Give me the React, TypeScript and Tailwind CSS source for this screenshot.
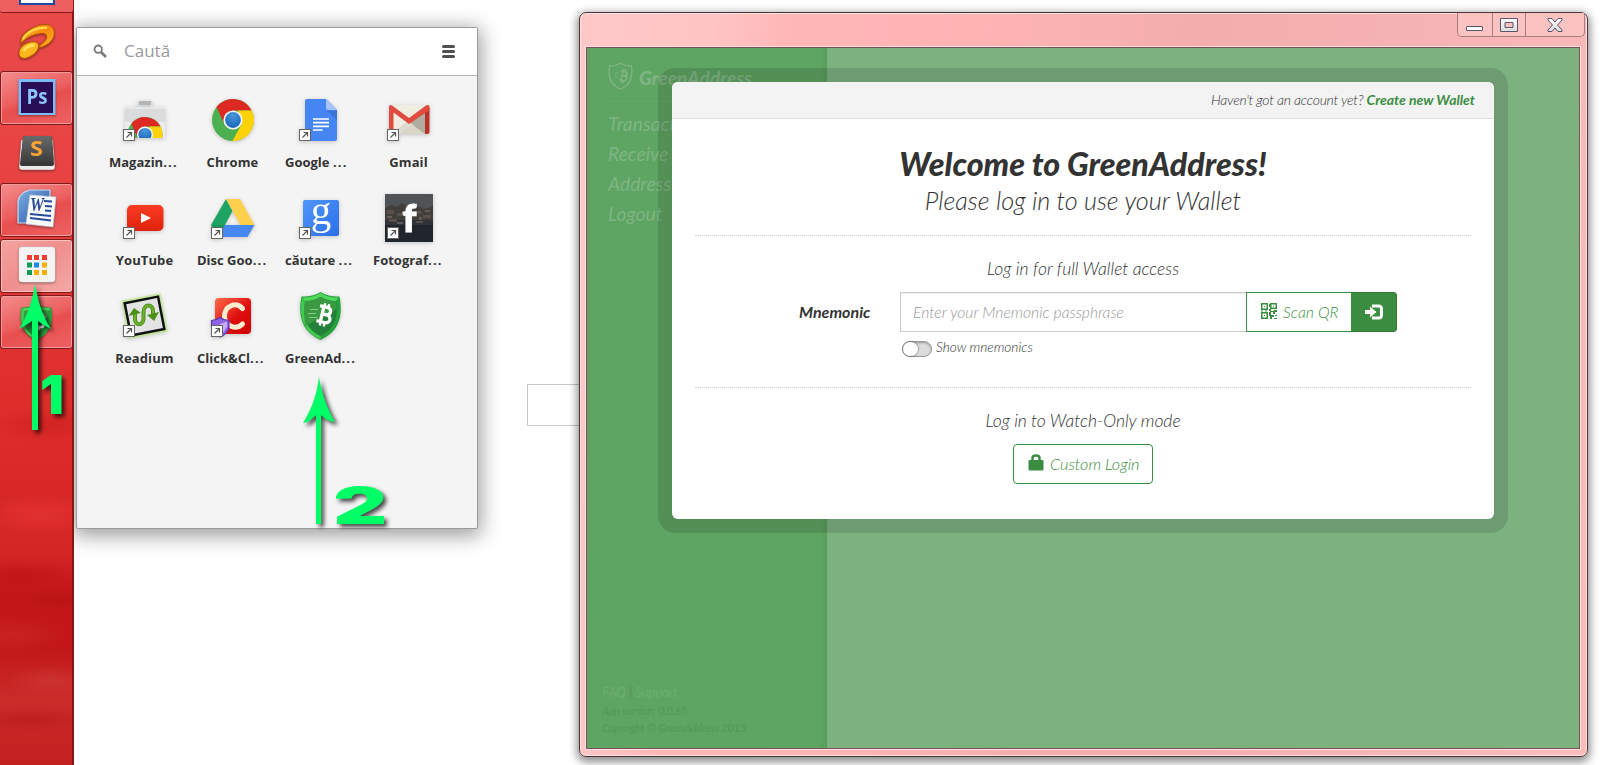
import React from "react";

function Badge() {
  return (
    <g>
      <rect x="2.5" y="33.5" width="11" height="11" fill="#fff" stroke="#666" />
      <path d="M5.5 41.5 L10.5 36.5 M6.5 36.5 H10.5 V40.5" fill="none" stroke="#555" strokeWidth="1.2" />
    </g>
  );
}

function ChromeBall({ cx, cy, r }: { cx: number; cy: number; r: number }) {
  return (
    <g transform={`translate(${cx} ${cy}) scale(${r / 21})`}>
      <circle r="21" fill="#4bb04f" />
      <path d="M-16.500 -13 A21 21 0 0 1 18.6 -9.5 L0 -9.5 L-8.2 4.8 Z" fill="#dc2a22" />
      <path d="M18.8 -9.5 A21 21 0 0 1 -0.6 21 L8.5 4.6 L5 -9.5 Z" fill="#fdd208" />
      <circle r="9.6" fill="#f4f6f8" />
      <circle r="7.9" fill="url(#blueBall)" />
    </g>
  );
}

function Shield() {
  return (
    <g>
      <path d="M23.5 0 C30 4 37 5 42.500 4.500 C45 18 46 38 23.500 48 C1 38 2 18 4.500 4.500 C10 5 17 4 23.500 0Z" fill="#25a03a" />
      <path d="M23.5 1 C30 5 37 6 41.500 5.500 L39 9 C33 9 28 7.500 23.500 5 C19 7.500 14 9 8 9 L5.500 5.500 C10 6 17 5 23.500 1Z" fill="#4fd65c" />
      <path d="M5 6 L8.500 9.500 C6 28 10 38 23.500 44 V47 C4 39 2.500 21 5 6Z" fill="#43cd50" />
      <path d="M23.5 5 C29 8 34 9.500 39 9.300 C41.500 28 36 38 23.500 44 C11 38 6 28 8 9.300 C13 9.500 18 8 23.500 5Z" fill="#23803a" />
      <path d="M8 9.300 C13 9.500 18 8 23.500 5 C29 8 34 9.500 39 9.300 L39.500 17 L8.500 34 C7 26 6.500 18 8 9.300Z" fill="#3a9a42" />
      <path d="M13 17.500H21 M11 21.500H19 M12 25.500H20" stroke="#8cc78e" strokeWidth="1" />
      <g transform="rotate(14 28 23)" fill="none" stroke="#fff" strokeWidth="3.300">
        <path d="M21 15H28.500C34 15 34 22.500 28.500 22.500H25H29C35.500 22.500 35.500 30.500 29 30.500H21 M25 15V30.500" />
        <path d="M25.500 11.500V15 M29.500 11.500V15 M25.500 31V34.500 M29.500 31V34.500" strokeWidth="2.300" />
      </g>
    </g>
  );
}

const icons: Record<string, React.ReactNode> = {
  store: (
    <g>
      <path d="M18 14V7H30V14" fill="none" stroke="#dcdddf" strokeWidth="3" />
      <rect x="18" y="5" width="12" height="4" fill="#b4b4b4" />
      <rect x="4" y="11" width="40" height="31" rx="1" fill="#d9dbdd" />
      <rect x="4" y="26" width="40" height="16" fill="#ebecee" />
      <path d="M4 12H44" stroke="#f2f2f2" strokeWidth="1" />
      <g clipPath="url(#storeClip)"><ChromeBall cx={24} cy={38.5} r={17.5} /></g>
      <Badge />
    </g>
  ),
  chrome: <ChromeBall cx={24} cy={24} r={21} />,
  docs: (
    <g>
      <path d="M10 3H29L40 14V43Q40 45 38 45H10Q8 45 8 43V5Q8 3 10 3Z" fill="#4686f4" />
      <path d="M29 3L40 14H31Q29 14 29 12Z" fill="#a6c4fa" />
      <path d="M29.500 14.500L40 24V14.500Z" fill="#3a72d8" />
      <path d="M16 23H32 M16 26.700H32 M16 30.300H32 M16 34H25.500" stroke="#fff" strokeWidth="1.700" />
      <Badge />
    </g>
  ),
  gmail: (
    <g>
      <rect x="4" y="9" width="40.500" height="29" rx="2" fill="#efece0" />
      <path d="M6 38L24 25L42 38Z" fill="#d9d6c9" />
      <path d="M24 26L40 15V38Z" fill="#b0ad9f" />
      <path d="M8 38L24 26L28 29L14 38Z" fill="#dedbcf" />
      <path d="M40 12H44.500V36Q44.500 38 42.500 38H40Z" fill="#b9302a" />
      <path d="M4 38V11Q4 8 7 9.500L24 22L41 9.500Q44.500 8 44.500 11V14L24 28L8.500 16.500V38Z" fill="#e04a3f" />
      <Badge />
    </g>
  ),
  youtube: (
    <g>
      <rect x="6" y="11" width="36.500" height="26" rx="5" fill="url(#ytRed)" />
      <path d="M20 19L30 24L20 29Z" fill="#fff" />
      <Badge />
    </g>
  ),
  drive: (
    <g>
      <path d="M17 5L23.500 17L9.500 43L2 31Z" fill="#1da362" />
      <path d="M17 5H31L45.500 31H31.500Z" fill="#ffd04b" />
      <path d="M2 31H45.500L38.500 43H9.500L16 31Z" fill="#4688f1" />
      <path d="M2 31L9.500 43L16 31Z" fill="#1b9558" />
      <Badge />
    </g>
  ),
  search: (
    <g>
      <rect x="6" y="6" width="36" height="36" rx="2" fill="url(#gBlue)" />
      <text x="24" y="29.500" textAnchor="middle" fontSize="41" fill="#fff" className="font-['Liberation_Serif',serif]">g</text>
      <Badge />
    </g>
  ),
  photos: (
    <g>
      <rect width="48" height="48" fill="#30343a" />
      <rect width="48" height="15" fill="#505355" />
      <path d="M0 14L6 11L12 13L17 9L24 14L32 12L40 15L48 12V26H0Z" fill="#413e3c" />
      <path d="M2 16H9V20H2Z M12 19H18V22H12Z M30 17H36V20H30Z M38 21H46V24H38Z M4 25H12V28H4Z M31 27H38V29H31Z" fill="#5a5049" />
      <path d="M18 18H24V20H18Z M34 23H37V26H34Z M2 22H7V24H2Z M40 16H45V18H40Z M12 28H18V30H12Z" fill="#625d58" />
      <rect y="31" width="48" height="17" fill="#20262c" />
      <text x="24.500" y="38" textAnchor="middle" fontSize="38" fontWeight="900" fill="#fff" stroke="#fff" strokeWidth="1.200" className="font-['Lato',sans-serif]">f</text>
      <Badge />
    </g>
  ),
  readium: (
    <g>
      <g transform="rotate(-11 24 24)">
        <rect x="5" y="6" width="37" height="36" fill="#b9e884" opacity="0.7" stroke="#b9e884" strokeWidth="3" />
        <rect x="6.500" y="7.500" width="34" height="33" fill="#e4e4e4" stroke="#111" strokeWidth="2.500" />
      </g>
      <path d="M14 20V27C14 34 22 34 22.500 27V20C23 11 32 12 32 19V26" fill="none" stroke="#4d8f1c" strokeWidth="4" />
      <path d="M14 20V27C14 34 22 34 22.500 27V20C23 11 32 12 32 19V26" fill="none" stroke="#6db12b" strokeWidth="2" />
      <path d="M7.500 24L13 16L20 21Z M26 23L38 20L33 29Z" fill="#4d8f1c" />
      <Badge />
    </g>
  ),
  click: (
    <g>
      <rect x="6" y="6" width="36" height="36" rx="4" fill="url(#ccRed)" />
      <path d="M33.500 16.500C27 9 15.500 14 15.500 24C15.500 34 27 38.500 33.500 32" fill="none" stroke="#fbecd0" strokeWidth="5" strokeLinecap="round" />
      <path d="M11 25.500Q15 28.500 20 28.500V35Q19 42 11 45Q3 42 2.500 35V28.500Q7 28.500 11 25.500Z" fill="#8d63ea" stroke="#5b35a8" strokeWidth="1.200" />
      <path d="M11 32L18 29.500V35Q16 39 11 43Z" fill="#c9a9fb" />
      <Badge />
    </g>
  ),
  green: <Shield />,
};

const apps = [
  { id: "store", label: "Magazin", cut: true },
  { id: "chrome", label: "Chrome" },
  { id: "docs", label: "Google ", cut: true },
  { id: "gmail", label: "Gmail" },
  { id: "youtube", label: "YouTube" },
  { id: "drive", label: "Disc Goo", cut: true },
  { id: "search", label: "căutare ", cut: true },
  { id: "photos", label: "Fotograf", cut: true },
  { id: "readium", label: "Readium" },
  { id: "click", label: "Click&Cl", cut: true },
  { id: "green", label: "GreenAd", cut: true },
];

function Defs() {
  return (
    <svg className="absolute h-0 w-0">
      <defs>
        <radialGradient id="blueBall" cx="0.5" cy="0.2" r="0.9"><stop offset="0" stopColor="#4a98dc" /><stop offset="1" stopColor="#1360b4" /></radialGradient>
        <clipPath id="storeClip"><rect x="6" y="15" width="36" height="27" /></clipPath>
        <linearGradient id="ytRed" x2="0" y2="1"><stop offset="0" stopColor="#fb3c23" /><stop offset="1" stopColor="#df220c" /></linearGradient>
        <linearGradient id="gBlue" x2="1" y2="1"><stop offset="0" stopColor="#4f97fb" /><stop offset="1" stopColor="#2a6fea" /></linearGradient>
        <linearGradient id="ccRed" x2="1" y2="1"><stop offset="0" stopColor="#ff6a4a" /><stop offset="0.55" stopColor="#e01010" /><stop offset="1" stopColor="#cc0000" /></linearGradient>
        <linearGradient id="jOrange" x2="1" y2="1"><stop offset="0" stopColor="#ffc31f" /><stop offset="0.5" stopColor="#f98a10" /><stop offset="1" stopColor="#ffb726" /></linearGradient>
        <linearGradient id="sGray" x2="0" y2="1"><stop offset="0" stopColor="#6a6a6a" /><stop offset="1" stopColor="#3d3d3d" /></linearGradient>
        <linearGradient id="wBlue" x2="1" y2="1"><stop offset="0" stopColor="#7fb0e4" /><stop offset="1" stopColor="#2450a0" /></linearGradient>
        <linearGradient id="winBtn" x2="0" y2="1"><stop offset="0" stopColor="#fff" /><stop offset="1" stopColor="#dcdcdc" /></linearGradient>
      </defs>
    </svg>
  );
}

const taskIcons: { id: string; node: React.ReactNode; frame?: "on" | "hot" }[] = [
  {
    id: "jet",
    node: (
      <g transform="translate(0 0.5) scale(0.97 1.06)">
        <path d="M3 18C1 8 18 0 29 0C41 1 40 15 28 20C25 21.500 22 22 20 22C22 20 25 18 28 15C31 12 30 8 24 8.500C16 9 8 13 3 18Z" fill="url(#jOrange)" stroke="#b3500c" strokeWidth="1" />
        <path d="M5 14C10 6 21 2.500 30 3" fill="none" stroke="#ffd94c" strokeWidth="2" />
        <path d="M1 27C1 20 10 16 17 16C24 17 22 25 15 29C8 33.500 1 33 1 27Z" fill="#ffb61c" stroke="#b3500c" strokeWidth="1" />
        <path d="M6 25C8 21 13 19 17 20" fill="none" stroke="#ffdf59" strokeWidth="3" />
      </g>
    ),
  },
  {
    id: "ps",
    frame: "on",
    node: (
      <g>
        <rect x="0.500" y="-1" width="37" height="36" fill="#7dbcf4" />
        <rect x="3" y="2" width="32" height="31" fill="#2a0d57" />
        <text x="19" y="23.500" textAnchor="middle" fontSize="21" fontWeight="700" fill="#8cc5ff" textLength="21" lengthAdjust="spacingAndGlyphs" className="font-['Open_Sans',sans-serif]">Ps</text>
      </g>
    ),
  },
  {
    id: "sublime",
    node: (
      <g>
        <path d="M3 4H35L37 31Q37 34 34 34H4Q1 34 1 31Z" fill="#eceae8" stroke="#a55" strokeWidth="0.500" />
        <path d="M5 2Q5 0 7 0H32Q34 0 34 2L36 28Q36 30 34 30H4Q2 30 2 28Z" fill="#383838" />
        <path d="M5 2Q5 0 7 0H32Q34 0 34 2L35.500 24Q35 26 33 26H5Q3 26 3 24Z" fill="url(#sGray)" />
        <text x="18.500" y="20" textAnchor="middle" fontSize="21" fontWeight="700" fill="#f9a137" textLength="13" lengthAdjust="spacingAndGlyphs" className="font-['Open_Sans',sans-serif]">S</text>
      </g>
    ),
  },
  {
    id: "word",
    frame: "on",
    node: (
      <g>
        <path d="M0 31V9Q2 0 12 -2H32V31Z" fill="url(#wBlue)" stroke="#c9dcf5" strokeWidth="1.200" />
        <path d="M12 3L38 5L35 35L8 32Z" fill="#f7f9fc" stroke="#c5cbd8" strokeWidth="0.700" />
        <text x="12" y="19" fontSize="18" fontWeight="700" fontStyle="italic" fill="#254a94" textLength="14" lengthAdjust="spacingAndGlyphs" className="font-['Liberation_Serif',serif]">W</text>
        <path d="M26 9L34 9.600 M27 14L34 14.500 M27 18.500L33 19 M12 22L33 24 M12 26L33 28.500" stroke="#274c9b" strokeWidth="2" />
      </g>
    ),
  },
  {
    id: "launcher",
    frame: "hot",
    node: (
      <g>
        <rect x="1" y="-1" width="36" height="35" rx="3" fill="#f4f4f4" stroke="#ddd" strokeWidth="0.600" />
        <path d="M9 7H14V12H9Z M16 7H21V12H16Z M24 7H29V12H24Z" fill="#f23d34" />
        <path d="M9 14.500H14V19.500H9Z M9 22H14V27H9Z" fill="#0f9d58" />
        <path d="M16 14.500H21V19.500H16Z" fill="#1a8cf0" />
        <path d="M24 14.500H29V19.500H24Z M24 22H29V27H24Z M16 22H21V27H16Z" fill="#fbb003" />
      </g>
    ),
  },
  {
    id: "greenaddress",
    frame: "on",
    node: <g transform="translate(0 0) scale(0.78 0.75)"><Shield /></g>,
  },
];

function Taskbar() {
  return (
    <div className="relative flex h-[765px] w-[74px] shrink-0 flex-col border-r-2 border-[#8a1518] bg-[linear-gradient(180deg,#ea4a4a_0px,#e84343_180px,#e03232_330px,#de2e2c_400px,#d82828_480px,#d52626_550px,#c31818_590px,#c21818_650px,#ca2c2a_700px,#c32020_765px)]">
      <div className="pointer-events-none absolute inset-x-0 bottom-0 h-[400px] bg-[radial-gradient(ellipse_60px_14px_at_20px_210px,#b40d0d66,transparent),radial-gradient(ellipse_46px_12px_at_60px_235px,#ad0a0a66,transparent),radial-gradient(ellipse_50px_18px_at_10px_270px,#d8383455,transparent),radial-gradient(ellipse_46px_16px_at_52px_315px,#d8504a55,transparent),radial-gradient(ellipse_60px_12px_at_30px_355px,#a8080855,transparent),radial-gradient(ellipse_60px_18px_at_50px_60px,#c81c1c88,transparent),radial-gradient(ellipse_60px_20px_at_40px_150px,#ea3c3888,transparent)]" />
      <div className="relative flex h-[13px] w-[73px] items-start justify-center rounded-b-[3px] border-b border-[#7c1a1c] bg-[#ee6060]">
        <div className="mt-0 h-[5px] w-[36px] border-x-2 border-b-2 border-[#1d49a3] bg-white" />
      </div>
      <div className="relative mt-[2px] flex flex-col gap-[2px]">
        {taskIcons.map((t) => (
          <div
            key={t.id}
            className={
              t.frame === "hot"
                ? "flex h-[54px] w-[73px] items-center justify-center rounded-[3px] border border-[#7c1a1c] bg-[linear-gradient(145deg,#f4a3a1,#ef8f8e_50%,#f3a9a7)] shadow-[inset_0_0_0_1px_#f8c0bf]"
                : t.frame === "on"
                  ? "flex h-[54px] w-[73px] items-center justify-center rounded-[3px] border border-[#7c1a1c] bg-[linear-gradient(160deg,#f48c8c,#ec6060_45%,#e84e4e_55%,#ee6262)] shadow-[inset_0_0_0_1px_#f29a9a]"
                  : "flex h-[54px] w-[73px] items-center justify-center"
            }
          >
            <svg width="38" height="36" viewBox="0 0 38 36" className="overflow-visible drop-shadow-[0_1px_1px_rgba(0,0,0,0.4)]">{t.node}</svg>
          </div>
        ))}
      </div>
    </div>
  );
}

function Launcher() {
  return (
    <div className="absolute left-[76px] top-[27px] flex h-[502px] w-[402px] flex-col rounded-[2px] border border-[#9b9b9b] bg-[#f4f4f4] shadow-[0_4px_20px_3px_rgba(0,0,0,0.38)]">
      <div className="flex h-[48px] items-center border-b border-[#b5b5b5] bg-white pl-[16px] pr-[22px]">
        <svg width="15" height="15" viewBox="0 0 15 15" fill="none" stroke="#7a7a7a">
          <circle cx="5.200" cy="5.200" r="3.700" strokeWidth="1.800" />
          <path d="M8 8L13 13" strokeWidth="2.600" />
        </svg>
        <div className="mb-[2px] ml-[16px] flex-1 font-['Open_Sans',sans-serif] text-[17px] leading-[24px] text-[#9b9b9b]">Caută</div>
        <div className="flex w-[13px] flex-col gap-[2px]">
          <div className="h-[3px] rounded-sm bg-[#505050]" />
          <div className="h-[3px] rounded-sm bg-[#505050]" />
          <div className="h-[3px] rounded-sm bg-[#505050]" />
        </div>
      </div>
      <div className="grid grid-cols-[repeat(4,88px)] pl-[24px] pt-[20px]">
        {apps.map((a) => (
          <div key={a.id} className="flex h-[98px] flex-col items-center">
            <svg width="48" height="48" viewBox="0 0 48 48" className="-ml-px overflow-visible drop-shadow-[0_1px_2px_rgba(0,0,0,0.2)]">{icons[a.id]}</svg>
            <div
              className={
                a.cut
                  ? "mt-[8px] w-[72px] whitespace-pre font-['Open_Sans',sans-serif] text-[13px] font-bold leading-[20px] text-[#333]"
                  : "mr-[1px] mt-[8px] w-[72px] whitespace-nowrap text-center font-['Open_Sans',sans-serif] text-[13px] font-bold leading-[20px] tracking-[0.1px] text-[#333]"
              }
            >
              {a.label}
              {a.cut && <span className="tracking-[1.2px]">...</span>}
            </div>
          </div>
        ))}
      </div>
    </div>
  );
}

function WindowControls() {
  return (
    <div className="-mr-[5px] flex h-[24px] w-[128px] rounded-b-[5px] border border-t-0 border-[#a57c7f] bg-[#fbc2c2]">
      <div className="flex flex-1 items-center justify-center border-r border-[#a57c7f]">
        <svg width="18" height="6" viewBox="0 0 18 6" className="mt-[9px]"><rect x="0.500" y="0.500" width="16" height="4" rx="0.500" fill="#fff" stroke="#5a566e" /></svg>
      </div>
      <div className="flex w-[33px] items-center justify-center border-r border-[#a57c7f]">
        <svg width="18" height="14" viewBox="0 0 18 14"><path d="M0.500 0.500H17.500V13.500H0.500Z M5 4.500V9.500H13V4.500Z" fillRule="evenodd" fill="url(#winBtn)" stroke="#5a566e" /></svg>
      </div>
      <div className="flex w-[58px] items-center justify-center">
        <svg width="16" height="14" viewBox="0 0 16 14"><path d="M1 0.500H5L8 4L11 0.500H15V2L10.500 7L15 12V13.500H11L8 10L5 13.500H1V12L5.500 7L1 2Z" fill="url(#winBtn)" stroke="#5a566e" /></svg>
      </div>
    </div>
  );
}

function Sidebar() {
  return (
    <div className="flex h-full w-[240px] shrink-0 flex-col bg-[linear-gradient(90deg,#5ea462_97%,#5a9c5e)] italic">
      <div className="ml-[16px] flex h-[54px] w-[208px] items-center border-b border-[#64a968] pl-[5px]">
        <svg width="25" height="28" viewBox="0 0 25 28" fill="none" stroke="#80b583" strokeWidth="1.300" className="mt-[3px]">
          <path d="M12.500 1C16 3.500 20 4 23.500 4C25 14 23 23 12.500 27C2 23 0 14 1.500 4C5 4 9 3.500 12.500 1Z" />
          <g transform="rotate(12 15 14)"><path d="M12 9.500H16C19 9.500 19 13.500 16 13.500H14H16.500C20 13.500 20 18.500 16.500 18.500H12 M14 9.500V18.500 M14.500 7V9.500 M16.500 7V9.500 M14.500 18.500V21 M16.500 18.500V21" strokeWidth="1.500" /></g>
          <path d="M7 10.500H11 M6 13H10 M7 15.500H11" strokeWidth="0.700" />
        </svg>
        <div className="ml-[6px] mt-[7px] text-[19px] font-black leading-[24px] text-[#80b583]">GreenAddress</div>
      </div>
      <div className="mt-[7px] flex flex-col pl-[21px] text-[19.300px] leading-[30px] text-[#80b583]">
        <div>Transactions</div>
        <div>Receive Money</div>
        <div>Address Book</div>
        <div>Logout</div>
      </div>
      <div className="mt-auto pb-[12px] pl-[15px] text-[11px] leading-[17px] tracking-[-0.02em] text-[#559759]">
        <div className="text-[13.500px] leading-[19px] tracking-[-0.02em] text-[#6bae6e]">FAQ <span className="text-[#559759]">|</span> Support</div>
        <div>App version: 0.0.65</div>
        <div>Copyright © GreenAddress 2015</div>
      </div>
    </div>
  );
}

function QrIcon() {
  return (
    <svg width="16" height="16" viewBox="0 0 16 16" fill="#3b8e41" className="mb-[2px]">
      <path fillRule="evenodd" d="M0 0H7V7H0Z M1.500 1.500V5.500H5.500V1.500Z M9 0H16V6H9Z M10.500 1.500V4.500H14.500V1.500Z M0 9H7V16H0Z M1.500 10.500V14.500H5.500V10.500Z" />
      <path d="M3 3H4V4H3Z M12 2.500H13V3.500H12Z M3 12H4V13H3Z M8 1H9V4H8Z M8 6H10V8H13V7H16V9H14V11H12V9H10V12H13V14H11V16H9V13H8V9H9V8H8Z M14 12H16V13H14Z M13 15H16V16H13Z M0 7.500H2V8.500H0Z M4 7.500H6V8.500H4Z" />
    </svg>
  );
}

function LoginModal() {
  return (
    <div className="absolute left-[85px] top-[34px] flex h-[437px] w-[822px] flex-col items-center rounded-[6px] bg-white italic text-[#333] shadow-[0_0_0_14px_rgba(0,0,0,0.12)]">
      <div className="flex h-[37px] w-full shrink-0 items-center justify-end rounded-t-[6px] border-b border-[#ddd] bg-[#f3f3f3] pb-[1px] pr-[19px] text-[14px] font-light">
        <span className="whitespace-pre tracking-[-0.018em]">Haven't got an account yet? </span>
        <span className="font-bold text-[#3b8e41]">Create new Wallet</span>
      </div>
      <h1 className="mt-[27px] h-[36px] whitespace-nowrap text-[32.200px] font-black leading-[36px]">Welcome to GreenAddress!</h1>
      <div className="h-[36px] whitespace-nowrap text-[25.200px] font-light leading-[36px]">Please log in to use your Wallet</div>
      <div className="mt-[17px] w-[776px] border-t border-dotted border-[#ccc]" />
      <div className="mt-[21px] whitespace-nowrap text-[17.500px] font-light leading-[24px]">Log in for full Wallet access</div>
      <div className="ml-[30px] mt-[11px] flex h-[40px] w-[598px] items-center">
        <div className="w-[101px] text-[16px] font-bold">Mnemonic</div>
        <div className="flex h-[40px] w-[346px] items-center border border-r-0 border-[#ccc] pl-[12px] pt-[1px] text-[15.700px] font-light text-[#999] shadow-[inset_0_1px_1px_rgba(0,0,0,0.075)]">Enter your Mnemonic passphrase</div>
        <div className="flex h-[40px] w-[106px] items-center border border-[#3b8e41] pl-[14px] text-[15.800px] font-light text-[#3b8e41]">
          <QrIcon />
          <span className="ml-[6px] whitespace-nowrap">Scan QR</span>
        </div>
        <div className="flex h-[40px] w-[45px] items-center justify-center rounded-r-[4px] border border-l-0 border-[#2f7a35] bg-[#3b8e41]">
          <svg width="19" height="16" viewBox="0 0 19 16">
            <path d="M7 2H13.500Q16.500 2 16.500 5V11Q16.500 14 13.500 14H7" fill="none" stroke="#fff" strokeWidth="3" />
            <path d="M0 6H5V2.500L11.500 8L5 13.500V10H0Z" fill="#fff" />
          </svg>
        </div>
      </div>
      <div className="ml-[30px] mt-[5px] flex h-[20px] w-[598px] items-center pl-[103px]">
        <div className="mt-[4px] h-[16px] w-[30px] rounded-full border border-[#999] bg-[#dcdcdc] shadow-[inset_0_1px_2px_rgba(0,0,0,0.3)]">
          <div className="h-[14px] w-[15px] rounded-full bg-white shadow-[0_0_1px_1px_rgba(0,0,0,0.25)]" />
        </div>
        <span className="ml-[4px] text-[13.700px] font-light">Show mnemonics</span>
      </div>
      <div className="mt-[30px] w-[776px] border-t border-dotted border-[#ccc]" />
      <div className="mt-[21px] whitespace-nowrap text-[17.500px] font-light leading-[24px]">Log in to Watch-Only mode</div>
      <div className="mt-[11px] flex h-[40px] w-[140px] items-center rounded-[4px] border border-[#3b8e41] pl-[14px] text-[16.200px] font-light text-[#3b8e41]">
        <svg width="16" height="17" viewBox="0 0 16 17" className="mb-[4px]">
          <path d="M4.500 7V4Q4.500 1.500 8 1.500Q11.500 1.500 11.500 4V7" fill="none" stroke="#3b8e41" strokeWidth="2.500" />
          <rect x="0.500" y="6" width="15" height="10.500" rx="1" fill="#3b8e41" />
        </svg>
        <span className="ml-[6px] whitespace-nowrap">Custom Login</span>
      </div>
    </div>
  );
}

function WalletWindow() {
  return (
    <div className="absolute left-[579px] top-[12px] flex h-[745px] w-[1009px] flex-col rounded-[7px] border border-[#4e3436] bg-[linear-gradient(100deg,#ffc9c9_0%,#ffc4c4_12%,#ffb6b6_19%,#ffb4b4_35%,#f3adad_55%,#f6b3b3_75%,#fbbcbc_100%)] pb-[7px] pl-[6px] pr-[7px] shadow-[inset_0_0_0_1px_#ffe3e3,0_3px_8px_2px_rgba(0,0,0,0.45)]">
      <div className="flex h-[34px] shrink-0 justify-end">
        <WindowControls />
      </div>
      <div className="relative flex min-h-0 flex-1 border border-[#7d5058] bg-[#7bb27f] font-['Lato',sans-serif] shadow-[0_0_0_1px_#ffe0e0]">
        <Sidebar />
        <LoginModal />
      </div>
    </div>
  );
}

function Marks() {
  return (
    <div className="pointer-events-none absolute left-0 top-0 h-[765px] w-[500px] font-['Inter',sans-serif] font-black text-[#00ff66] drop-shadow-[3px_3px_2px_rgba(0,0,0,0.7)]">
      <svg width="500" height="765" viewBox="0 0 500 765" fill="#00ff66">
        <path d="M35 284C38 302 43 317 51 329Q43 325 38 321V430H32V321Q26 325 19 329C27 317 32 302 35 284Z" />
        <path d="M319 377C322 395 328 410 335 422Q328 422 321 415V524H316V415Q310 422 303 423C311 410 317 395 319 377Z" />
      </svg>
      <div className="absolute left-[40px] top-[363px] origin-left text-[53px] leading-[64px]">1</div>
      <div className="absolute left-[333px] top-[474px] origin-left scale-x-[1.65] text-[51px] leading-[64px]">2</div>
    </div>
  );
}

export default function App() {
  return (
    <div className="relative flex h-[765px] w-[1602px] overflow-hidden bg-white">
      <Defs />
      <div className="absolute left-[527px] top-[384px] h-[42px] w-[80px] border border-[#c8c8c8] bg-white" />
      <Launcher />
      <Taskbar />
      <WalletWindow />
      <Marks />
    </div>
  );
}
